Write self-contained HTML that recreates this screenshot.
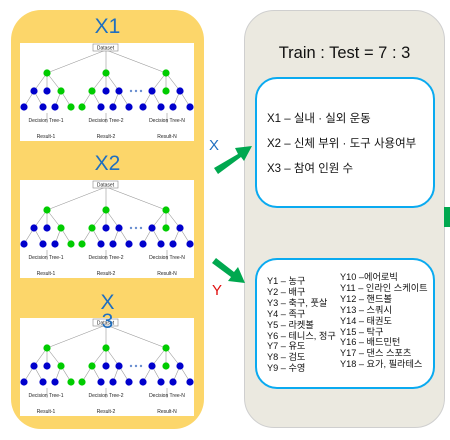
<!DOCTYPE html>
<html><head><meta charset="utf-8"><style>
*{margin:0;padding:0;box-sizing:border-box}
body{width:450px;height:440px;background:#fff;position:relative;overflow:hidden;font-family:"Liberation Sans","Noto Sans CJK KR",sans-serif}
.abs{position:absolute}
.yel{left:11px;top:10px;width:193px;height:419px;background:#fcd66a;border-radius:30px}
.lbl{color:#1f6fc0;font-size:21px;text-align:center;width:193px;left:11px}
.img{left:20px;width:174px;height:98px;background:#fff}
.right{left:244px;top:10px;width:201px;height:418px;background:#ebe9e0;border:1.5px solid #cfcfcf;border-radius:30px}
.bx{left:255px;width:180px;height:131px;background:#fff;border:2.5px solid #0aaaf0;border-radius:22px}
.t1{font-size:11.5px;color:#111;left:267px}
.y{font-size:9.2px;color:#111;line-height:10.9px;white-space:nowrap}
</style></head><body>
<div class="abs yel"></div>
<div class="abs lbl" style="top:15px">X1</div>
<div class="abs lbl" style="top:152px">X2</div>

<div class="abs img" style="top:43px"><svg width="174" height="98" viewBox="0 0 174 98" font-family="Liberation Sans" font-size="5" text-anchor="middle" fill="#222">
<g stroke="#999" stroke-width="0.6"><line x1="86" y1="7" x2="27" y2="30"/><line x1="86" y1="7" x2="86" y2="30"/><line x1="86" y1="7" x2="146" y2="30"/>
<path d="M27 30L14 48M27 30L27 48M27 30L41 48M14 48L4 64M14 48L23 64M41 48L35 64M41 48L51 64M86 30L72 48M86 30L86 48M86 30L99 48M72 48L62 64M72 48L81 64M99 48L93 64M99 48L109 64M146 30L132 48M146 30L146 48M146 30L160 48M132 48L123 64M132 48L141 64M160 48L153 64M160 48L170 64M27 70V80M86 70V80M147 70V80"/></g>
<rect x="73" y="1" width="25" height="7" fill="#fff" stroke="#888" stroke-width="0.6"/><text x="85.5" y="6.5">Dataset</text>
<g fill="#00cc00"><circle cx="27" cy="30" r="3.6"/><circle cx="86" cy="30" r="3.6"/><circle cx="146" cy="30" r="3.6"/><circle cx="41" cy="48" r="3.6"/><circle cx="72" cy="48" r="3.6"/><circle cx="146" cy="48" r="3.6"/><circle cx="51" cy="64" r="3.6"/><circle cx="62" cy="64" r="3.6"/></g>
<g fill="#0000cc"><circle cx="14" cy="48" r="3.6"/><circle cx="27" cy="48" r="3.6"/><circle cx="86" cy="48" r="3.6"/><circle cx="99" cy="48" r="3.6"/><circle cx="132" cy="48" r="3.6"/><circle cx="160" cy="48" r="3.6"/><circle cx="4" cy="64" r="3.6"/><circle cx="23" cy="64" r="3.6"/><circle cx="35" cy="64" r="3.6"/><circle cx="81" cy="64" r="3.6"/><circle cx="93" cy="64" r="3.6"/><circle cx="109" cy="64" r="3.6"/><circle cx="123" cy="64" r="3.6"/><circle cx="141" cy="64" r="3.6"/><circle cx="153" cy="64" r="3.6"/><circle cx="170" cy="64" r="3.6"/></g>
<g fill="#6a8fd0"><circle cx="111" cy="48" r="1.2"/><circle cx="116" cy="48" r="1.2"/><circle cx="121" cy="48" r="1.2"/></g>
<text x="26" y="79">Decision Tree-1</text><text x="86" y="79">Decision Tree-2</text><text x="147" y="79">Decision Tree-N</text>
<text x="26" y="95">Result-1</text><text x="86" y="95">Result-2</text><text x="147" y="95">Result-N</text></svg></div>

<div class="abs img" style="top:180px"><svg width="174" height="98" viewBox="0 0 174 98" font-family="Liberation Sans" font-size="5" text-anchor="middle" fill="#222">
<g stroke="#999" stroke-width="0.6"><line x1="86" y1="7" x2="27" y2="30"/><line x1="86" y1="7" x2="86" y2="30"/><line x1="86" y1="7" x2="146" y2="30"/>
<path d="M27 30L14 48M27 30L27 48M27 30L41 48M14 48L4 64M14 48L23 64M41 48L35 64M41 48L51 64M86 30L72 48M86 30L86 48M86 30L99 48M72 48L62 64M72 48L81 64M99 48L93 64M99 48L109 64M146 30L132 48M146 30L146 48M146 30L160 48M132 48L123 64M132 48L141 64M160 48L153 64M160 48L170 64M27 70V80M86 70V80M147 70V80"/></g>
<rect x="73" y="1" width="25" height="7" fill="#fff" stroke="#888" stroke-width="0.6"/><text x="85.5" y="6.5">Dataset</text>
<g fill="#00cc00"><circle cx="27" cy="30" r="3.6"/><circle cx="86" cy="30" r="3.6"/><circle cx="146" cy="30" r="3.6"/><circle cx="41" cy="48" r="3.6"/><circle cx="72" cy="48" r="3.6"/><circle cx="146" cy="48" r="3.6"/><circle cx="51" cy="64" r="3.6"/><circle cx="62" cy="64" r="3.6"/></g>
<g fill="#0000cc"><circle cx="14" cy="48" r="3.6"/><circle cx="27" cy="48" r="3.6"/><circle cx="86" cy="48" r="3.6"/><circle cx="99" cy="48" r="3.6"/><circle cx="132" cy="48" r="3.6"/><circle cx="160" cy="48" r="3.6"/><circle cx="4" cy="64" r="3.6"/><circle cx="23" cy="64" r="3.6"/><circle cx="35" cy="64" r="3.6"/><circle cx="81" cy="64" r="3.6"/><circle cx="93" cy="64" r="3.6"/><circle cx="109" cy="64" r="3.6"/><circle cx="123" cy="64" r="3.6"/><circle cx="141" cy="64" r="3.6"/><circle cx="153" cy="64" r="3.6"/><circle cx="170" cy="64" r="3.6"/></g>
<g fill="#6a8fd0"><circle cx="111" cy="48" r="1.2"/><circle cx="116" cy="48" r="1.2"/><circle cx="121" cy="48" r="1.2"/></g>
<text x="26" y="79">Decision Tree-1</text><text x="86" y="79">Decision Tree-2</text><text x="147" y="79">Decision Tree-N</text>
<text x="26" y="95">Result-1</text><text x="86" y="95">Result-2</text><text x="147" y="95">Result-N</text></svg></div>

<div class="abs img" style="top:318px"><svg width="174" height="98" viewBox="0 0 174 98" font-family="Liberation Sans" font-size="5" text-anchor="middle" fill="#222">
<g stroke="#999" stroke-width="0.6"><line x1="86" y1="7" x2="27" y2="30"/><line x1="86" y1="7" x2="86" y2="30"/><line x1="86" y1="7" x2="146" y2="30"/>
<path d="M27 30L14 48M27 30L27 48M27 30L41 48M14 48L4 64M14 48L23 64M41 48L35 64M41 48L51 64M86 30L72 48M86 30L86 48M86 30L99 48M72 48L62 64M72 48L81 64M99 48L93 64M99 48L109 64M146 30L132 48M146 30L146 48M146 30L160 48M132 48L123 64M132 48L141 64M160 48L153 64M160 48L170 64M27 70V80M86 70V80M147 70V80"/></g>
<rect x="73" y="1" width="25" height="7" fill="#fff" stroke="#888" stroke-width="0.6"/><text x="85.5" y="6.5">Dataset</text>
<g fill="#00cc00"><circle cx="27" cy="30" r="3.6"/><circle cx="86" cy="30" r="3.6"/><circle cx="146" cy="30" r="3.6"/><circle cx="41" cy="48" r="3.6"/><circle cx="72" cy="48" r="3.6"/><circle cx="146" cy="48" r="3.6"/><circle cx="51" cy="64" r="3.6"/><circle cx="62" cy="64" r="3.6"/></g>
<g fill="#0000cc"><circle cx="14" cy="48" r="3.6"/><circle cx="27" cy="48" r="3.6"/><circle cx="86" cy="48" r="3.6"/><circle cx="99" cy="48" r="3.6"/><circle cx="132" cy="48" r="3.6"/><circle cx="160" cy="48" r="3.6"/><circle cx="4" cy="64" r="3.6"/><circle cx="23" cy="64" r="3.6"/><circle cx="35" cy="64" r="3.6"/><circle cx="81" cy="64" r="3.6"/><circle cx="93" cy="64" r="3.6"/><circle cx="109" cy="64" r="3.6"/><circle cx="123" cy="64" r="3.6"/><circle cx="141" cy="64" r="3.6"/><circle cx="153" cy="64" r="3.6"/><circle cx="170" cy="64" r="3.6"/></g>
<g fill="#6a8fd0"><circle cx="111" cy="48" r="1.2"/><circle cx="116" cy="48" r="1.2"/><circle cx="121" cy="48" r="1.2"/></g>
<text x="26" y="79">Decision Tree-1</text><text x="86" y="79">Decision Tree-2</text><text x="147" y="79">Decision Tree-N</text>
<text x="26" y="95">Result-1</text><text x="86" y="95">Result-2</text><text x="147" y="95">Result-N</text></svg></div>

<div class="abs lbl" style="top:293px;line-height:20px">X</div>
<div class="abs lbl" style="top:312px;line-height:20px">3</div>

<div class="abs right"></div>
<div class="abs" style="left:244px;width:201px;top:44px;text-align:center;font-size:16.5px;color:#111">Train : Test = 7 : 3</div>
<div class="abs bx" style="top:77px"></div>
<div class="abs t1" style="top:110px">X1 – 실내 · 실외 운동</div>
<div class="abs t1" style="top:135px">X2 – 신체 부위 · 도구 사용여부</div>
<div class="abs t1" style="top:160px">X3 – 참여 인원 수</div>
<div class="abs bx" style="top:258px"></div>
<div class="abs y" style="left:267px;top:276px">Y1 – 농구<br>Y2 – 배구<br>Y3 – 축구, 풋살<br>Y4 – 족구<br>Y5 – 라켓볼<br>Y6 – 테니스, 정구<br>Y7 – 유도<br>Y8 – 검도<br>Y9 – 수영</div>
<div class="abs y" style="left:340px;top:272px">Y10 –에어로빅<br>Y11 – 인라인 스케이트<br>Y12 – 핸드볼<br>Y13 – 스쿼시<br>Y14 – 태권도<br>Y15 – 탁구<br>Y16 – 배드민턴<br>Y17 – 댄스 스포츠<br>Y18 – 요가, 필라테스</div>

<svg class="abs" style="left:0;top:0" width="450" height="440">
<path d="M214 168L238 154L235 148L252 146L244 161L241 157L218 174Z" fill="#00a84f"/>
<path d="M216 258L234 272L238 267L245 283L228 281L231 277L212 263Z" fill="#00a84f"/>
<rect x="444" y="207" width="6" height="20" fill="#00a84f"/>
<text x="209" y="150" font-family="Liberation Sans" font-size="15" fill="#1f6fc0">X</text>
<text x="212" y="295" font-family="Liberation Sans" font-size="15" fill="#e01010">Y</text>
</svg>
</body></html>
